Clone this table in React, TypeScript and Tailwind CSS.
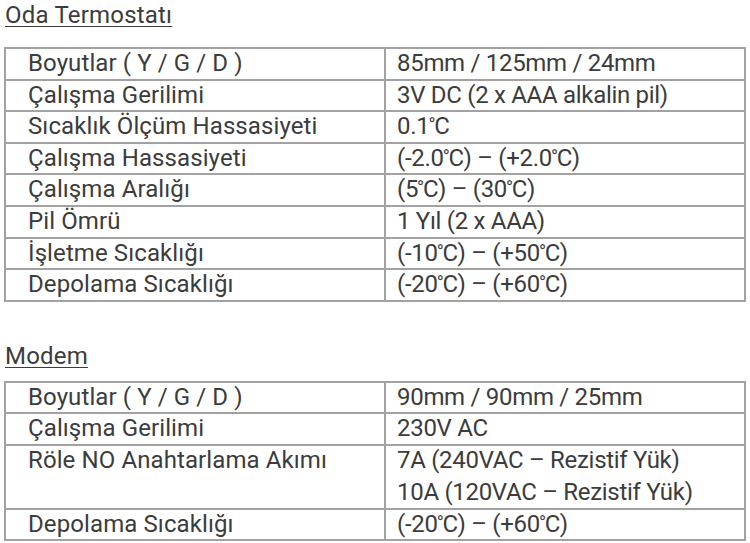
import React from "react";

type Row = { k: string; v: string[] };

const t1: Row[] = [
  { k: "Boyutlar ( Y / G / D )", v: ["85mm / 125mm / 24mm"] },
  { k: "Çalışma Gerilimi", v: ["3V DC (2 x AAA alkalin pil)"] },
  { k: "Sıcaklık Ölçüm Hassasiyeti", v: ["0.1°C"] },
  { k: "Çalışma Hassasiyeti", v: ["(-2.0°C) – (+2.0°C)"] },
  { k: "Çalışma Aralığı", v: ["(5°C) – (30°C)"] },
  { k: "Pil Ömrü", v: ["1 Yıl (2 x AAA)"] },
  { k: "İşletme Sıcaklığı", v: ["(-10°C) – (+50°C)"] },
  { k: "Depolama Sıcaklığı", v: ["(-20°C) – (+60°C)"] },
];

const t2: Row[] = [
  { k: "Boyutlar ( Y / G / D )", v: ["90mm / 90mm / 25mm"] },
  { k: "Çalışma Gerilimi", v: ["230V AC"] },
  { k: "Röle NO Anahtarlama Akımı", v: ["7A (240VAC – Rezistif Yük)", "10A (120VAC – Rezistif Yük)"] },
  { k: "Depolama Sıcaklığı", v: ["(-20°C) – (+60°C)"] },
];

function Val({ s }: { s: string }) {
  const parts = s.split("°");
  return (
    <>
      {parts.map((p, i) => (
        <React.Fragment key={i}>
          {p}
          {i < parts.length - 1 && (
            <span className="relative -top-[3px] text-[19px] leading-[0] -ml-[1px] -mr-[1px]">°</span>
          )}
        </React.Fragment>
      ))}
    </>
  );
}

function Table({ rows }: { rows: Row[] }) {
  return (
    <table className="w-[742px] ml-[4px] border-collapse table-fixed">
      <colgroup>
        <col className="w-[380px]" />
        <col />
      </colgroup>
      <tbody>
        {rows.map((r) => (
          <tr key={r.k}>
            <td className="border-2 border-[#a2a2a2] align-top pl-[22px] py-0 leading-[29.6px] text-[24px] tracking-[0.1px]">
              {r.k}
            </td>
            <td className="border-2 border-[#a2a2a2] align-top pl-[11px] py-0 leading-[29.6px] text-[24px] tracking-[-0.3px]">
              {r.v.map((x, i) => (
                <div key={i} className={i > 0 ? "leading-[32px]" : ""}>
                  <Val s={x} />
                </div>
              ))}
            </td>
          </tr>
        ))}
      </tbody>
    </table>
  );
}

export default function App() {
  return (
    <div className="w-[750px] h-[543px] bg-white text-[#3c3c3c] overflow-hidden" style={{ fontFamily: "Roboto, 'Noto Sans', sans-serif" }}>
      <div className="pl-[5px] text-[24px] leading-[30px] tracking-[0.2px] underline underline-offset-[3px] decoration-1">
        Oda Termostatı
      </div>
      <div className="mt-[17px]">
        <Table rows={t1} />
      </div>
      <div className="mt-[39px] pl-[5px] text-[24px] leading-[30px] tracking-[0.2px] underline underline-offset-[3px] decoration-1">
        Modem
      </div>
      <div className="mt-[10px]">
        <Table rows={t2} />
      </div>
    </div>
  );
}
